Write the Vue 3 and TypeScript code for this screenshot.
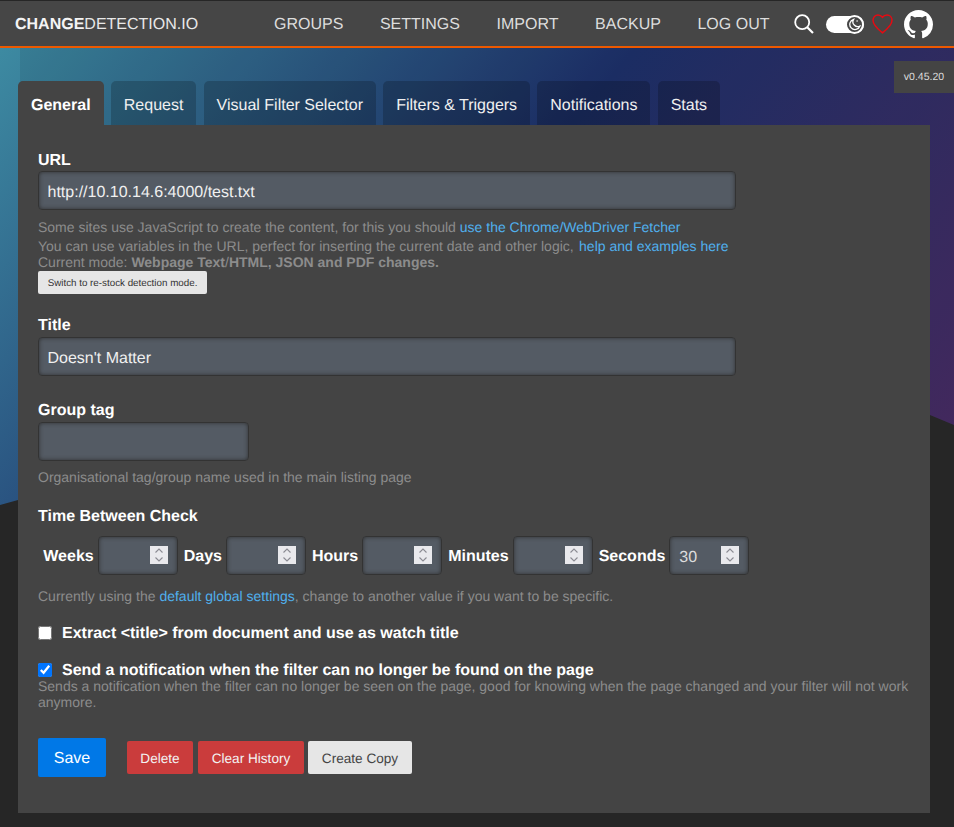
<script setup lang="ts">
const navItems: string[] = ['GROUPS', 'SETTINGS', 'IMPORT', 'BACKUP', 'LOG OUT']
const tabs: string[] = ['General', 'Request', 'Visual Filter Selector', 'Filters & Triggers', 'Notifications', 'Stats']
const timeFields: { label: string; value: string }[] = [
  { label: 'Weeks', value: '' },
  { label: 'Days', value: '' },
  { label: 'Hours', value: '' },
  { label: 'Minutes', value: '' },
  { label: 'Seconds', value: '30' },
]
</script>

<template>
  <div class="page">
    <div class="backdrop"><div class="tint"></div></div>

    <header class="header">
      <a class="logo"><strong>CHANGE</strong>DETECTION.IO</a>
      <nav class="nav">
        <a v-for="item in navItems" :key="item">{{ item }}</a>
      </nav>
      <div class="icons">
        <svg class="search" width="20" height="20" viewBox="0 0 20 20" fill="none" stroke="#fff">
          <circle cx="8.2" cy="8.2" r="7" stroke-width="1.8" />
          <path d="M13.2 13.2L19 19" stroke-width="2.2" />
        </svg>
        <span class="toggle">
          <span class="knob">
            <svg width="13" height="13" viewBox="0 0 12 12">
              <path d="M5.2 1.2a4.8 4.8 0 1 0 5.8 6.2 4.4 4.4 0 0 1-5.8-6.2z" fill="none" stroke="#fff" stroke-width="1.2" />
              <circle cx="8.4" cy="2.8" r=".7" fill="#fff" />
            </svg>
          </span>
        </span>
        <svg class="heart" width="21" height="20" viewBox="0 0 21 20" fill="none" stroke="#e60a12" stroke-width="1.500">
          <path d="M10.500 18.800C7 16 1 11.500 1 6.200 1 3.200 3.200 1 6 1c1.900 0 3.500.9 4.500 2.300C11.500 1.900 13.100 1 15 1c2.800 0 5 2.200 5 5.200 0 5.300-6 9.800-9.500 12.600z" />
        </svg>
        <svg class="github" width="29" height="29" viewBox="0 0 16 16" fill="#fff">
          <path fill-rule="evenodd" d="M8 0C3.58 0 0 3.58 0 8c0 3.540 2.290 6.530 5.470 7.590.4.070.55-.170.55-.380 0-.190-.010-.820-.010-1.490-2.010.370-2.530-.490-2.690-.940-.090-.230-.480-.940-.820-1.130-.280-.150-.680-.520-.010-.530.630-.010 1.080.580 1.230.820.720 1.210 1.870.870 2.330.660.070-.520.280-.870.510-1.070-1.780-.200-3.640-.890-3.640-3.950 0-.870.310-1.590.820-2.150-.080-.200-.360-1.020.080-2.120 0 0 .670-.210 2.200.820.640-.180 1.320-.270 2-.270s1.360.090 2 .270c1.530-1.040 2.200-.820 2.200-.820.440 1.100.160 1.920.080 2.120.510.560.820 1.270.820 2.150 0 3.070-1.870 3.750-3.650 3.950.290.250.540.730.540 1.480 0 1.070-.010 1.930-.010 2.200 0 .210.150.460.550.380A8.010 8.010 0 0 0 16 8c0-4.420-3.580-8-8-8z" />
        </svg>
      </div>
    </header>

    <div class="version">v0.45.20</div>

    <main class="main">
      <ul class="tabs">
        <li v-for="(tab, i) in tabs" :key="tab" :class="{ active: i === 0 }">{{ tab }}</li>
      </ul>

      <form class="panel" @submit.prevent>
        <section class="field url-field">
          <label>URL</label>
          <input class="text wide" type="text" value="http://10.10.14.6:4000/test.txt" />
          <div class="help first">
            Some sites use JavaScript to create the content, for this you should <a>use the Chrome/WebDriver Fetcher</a>
          </div>
          <div class="help second">
            You can use variables in the URL, perfect for inserting the current date and other logic, <a class="examples">help and examples here</a>
          </div>
          <div class="help third">Current mode: <strong>Webpage Text</strong>/<strong>HTML, JSON and PDF changes.</strong></div>
          <button class="mode" type="button">Switch to re-stock detection mode.</button>
        </section>

        <section class="field title-field">
          <label>Title</label>
          <input class="text wide" type="text" value="Doesn't Matter" />
        </section>

        <section class="field tag-field">
          <label>Group tag</label>
          <input class="text tag" type="text" />
          <div class="help tag-help">Organisational tag/group name used in the main listing page</div>
        </section>

        <section class="field time-field">
          <label>Time Between Check</label>
          <div class="time-row">
            <template v-for="f in timeFields" :key="f.label">
              <span class="time-label">{{ f.label }}</span>
              <span class="num-wrap">
                <input class="text num" type="number" :value="f.value" />
                <svg class="spin" width="18" height="18" viewBox="0 0 18 18" fill="none" stroke="#8b8b93" stroke-width="1.100">
                  <rect width="18" height="18" fill="#e9e9ed" stroke="none" />
                  <path d="M5.500 6.500L9 3l3.500 3.500M5.500 11.500L9 15l3.500-3.500" />
                </svg>
              </span>
            </template>
          </div>
          <div class="help time-help">
            Currently using the <a>default global settings</a>, change to another value if you want to be specific.
          </div>
        </section>

        <div class="check extract">
          <input id="extract" type="checkbox" />
          <label for="extract">Extract &lt;title&gt; from document and use as watch title</label>
        </div>

        <div class="check notify">
          <input id="notify" type="checkbox" checked />
          <label for="notify">Send a notification when the filter can no longer be found on the page</label>
        </div>
        <div class="help notify-help">
          Sends a notification when the filter can no longer be seen on the page, good for knowing when the page changed and your filter will not work anymore.
        </div>

        <div class="actions">
          <button class="btn save" type="submit">Save</button>
          <button class="btn small red del" type="button">Delete</button>
          <button class="btn small red clear" type="button">Clear History</button>
          <button class="btn small grey" type="button">Create Copy</button>
        </div>
      </form>
    </main>
  </div>
</template>

<style>
html,
body {
  margin: 0;
  background: #262626;
}
</style>

<style scoped>
.page {
  position: relative;
  width: 954px;
  height: 827px;
  overflow: hidden;
  font-family: "Liberation Sans", Arial, sans-serif;
  font-size: 16px;
  color: #fff;
  text-rendering: geometricPrecision;
}
.page input,
.page button {
  text-rendering: geometricPrecision;
}
.backdrop {
  position: absolute;
  inset: 0;
  background: linear-gradient(130deg, #3f90a5 0%, #1e316c 41%, #4d2c64 84%);
  clip-path: polygon(0 505px, 18px 500px, 300px 420px, 600px 370px, 800px 380px, 930px 415px, 954px 425px, 954px 0, 0 0);
}
.tint {
  position: absolute;
  left: 20px;
  right: 0;
  top: 48px;
  bottom: 0;
  background: rgba(0, 0, 0, 0.08);
}
.header {
  position: relative;
  box-sizing: border-box;
  height: 48px;
  display: flex;
  align-items: center;
  padding: 1px 0 0 15px;
  background: #464646;
  border-top: 1px solid #262626;
  border-bottom: 2px solid #ed5900;
}
.logo {
  width: 259px;
  padding-top: 2px;
  color: #e8e8e8;
  font-size: 16px;
}
.logo strong {
  color: #f4f4f4;
}
.nav {
  display: flex;
  gap: 36.600px;
  padding-top: 2px;
}
.nav a {
  color: #ddd;
  font-size: 16px;
}
.icons {
  position: relative;
  display: flex;
  align-items: center;
  margin-left: 24.200px;
}
.search {
  display: block;
}
.toggle {
  display: block;
  width: 38px;
  height: 17px;
  margin-left: 12px;
  border-radius: 9px;
  background: #fff;
  position: relative;
}
.knob {
  position: absolute;
  right: 0;
  top: -1px;
  width: 19px;
  height: 19px;
  box-sizing: border-box;
  border: 2px solid #fff;
  border-radius: 50%;
  background: #464646;
  display: flex;
  align-items: center;
  justify-content: center;
}
.heart {
  margin-left: 8px;
}
.github {
  margin-left: 11px;
}
.version {
  position: absolute;
  right: 0;
  top: 61px;
  width: 60px;
  height: 32px;
  background: #444;
  color: #ddd;
  font-size: 10.500px;
  line-height: 32px;
  text-align: center;
}
.main {
  position: relative;
  width: 912px;
  margin: 33px 0 0 18px;
}
.tabs {
  display: flex;
  gap: 7.200px;
  list-style: none;
  margin: 0;
  padding: 0;
}
.tabs li {
  height: 44px;
  line-height: 49px;
  padding: 0 13px;
  border-radius: 5px 5px 0 0;
  background: rgba(0, 0, 0, 0.2);
  color: #f0f0f0;
}
.tabs li.active {
  background: #444;
  color: #fff;
  font-weight: 700;
}
.panel {
  box-sizing: border-box;
  height: 688px;
  padding: 25px 20px 0;
  background: #444;
}
.field label {
  display: block;
  height: 21px;
  line-height: 20px;
  font-weight: 700;
  color: #fff;
}
.url-field label {
  line-height: 22px;
}
.text {
  box-sizing: border-box;
  height: 39px;
  padding: 4px 8.500px 0;
  background: #545b64;
  border: 1px solid #333;
  border-radius: 4px;
  box-shadow: inset 0 0 4px #303030;
  color: #f0f0f0;
  font-family: inherit;
  font-size: 16px;
  outline: none;
  display: block;
}
.wide {
  width: 698px;
}
.tag {
  width: 211px;
}
.help {
  color: #8c8c8c;
  font-size: 14px;
  line-height: 16px;
}
.help a {
  color: #50b0ee;
}
.help .examples {
  margin-left: 1.500px;
}
.help.first {
  margin-top: 9px;
}
.help.second {
  margin-top: 3px;
}
.mode {
  display: block;
  width: 169px;
  height: 23px;
  margin-top: 1px;
  padding: 1px 0 0;
  border: 0;
  border-radius: 2px;
  background: #e6e6e6;
  color: #333;
  font-family: inherit;
  font-size: 9.800px;
}
.title-field {
  margin-top: 22px;
}
.tag-field {
  margin-top: 25px;
}
.tag-help {
  margin-top: 8px;
}
.time-field {
  margin-top: 22px;
}
.time-row {
  display: flex;
  align-items: center;
  margin-top: 8px;
  padding-left: 5.300px;
}
.time-label {
  padding-top: 3px;
  font-weight: 700;
  color: #fff;
  margin-right: 4px;
}
.num-wrap {
  position: relative;
  display: block;
  margin-right: 6px;
}
.num {
  width: 80px;
  padding-left: 9px;
  color: #ddd;
  appearance: textfield;
}
.num::-webkit-inner-spin-button {
  appearance: none;
  display: none;
}
.spin {
  position: absolute;
  left: 52px;
  top: 10px;
  pointer-events: none;
}
.time-help {
  margin-top: 13px;
}
.check {
  display: flex;
  align-items: center;
  height: 18px;
}
.check input {
  width: 14px;
  height: 14px;
  margin: 0 10px 0 0;
}
.check label {
  padding-top: 1px;
  font-weight: 700;
  color: #fff;
}
.extract {
  margin-top: 20px;
}
.notify {
  margin-top: 19px;
}
.notify-help {
  margin-top: -1px;
}
.actions {
  display: flex;
  align-items: center;
  margin-top: 28px;
}
.btn {
  border: 0;
  border-radius: 2px;
  padding: 0;
  font-family: inherit;
}
.save {
  width: 68px;
  height: 39px;
  padding-top: 2px;
  margin-right: 21px;
  background: #0078e7;
  color: #fff;
  font-size: 16px;
}
.small {
  height: 33px;
  padding-top: 2px;
  font-size: 13.600px;
}
.red {
  background: #ca3c3c;
  color: #f3f3f3;
}
.del {
  width: 66px;
  margin-right: 5px;
}
.clear {
  width: 106px;
  margin-right: 4px;
}
.grey {
  width: 104px;
  background: #e6e6e6;
  color: #444;
}
</style>
